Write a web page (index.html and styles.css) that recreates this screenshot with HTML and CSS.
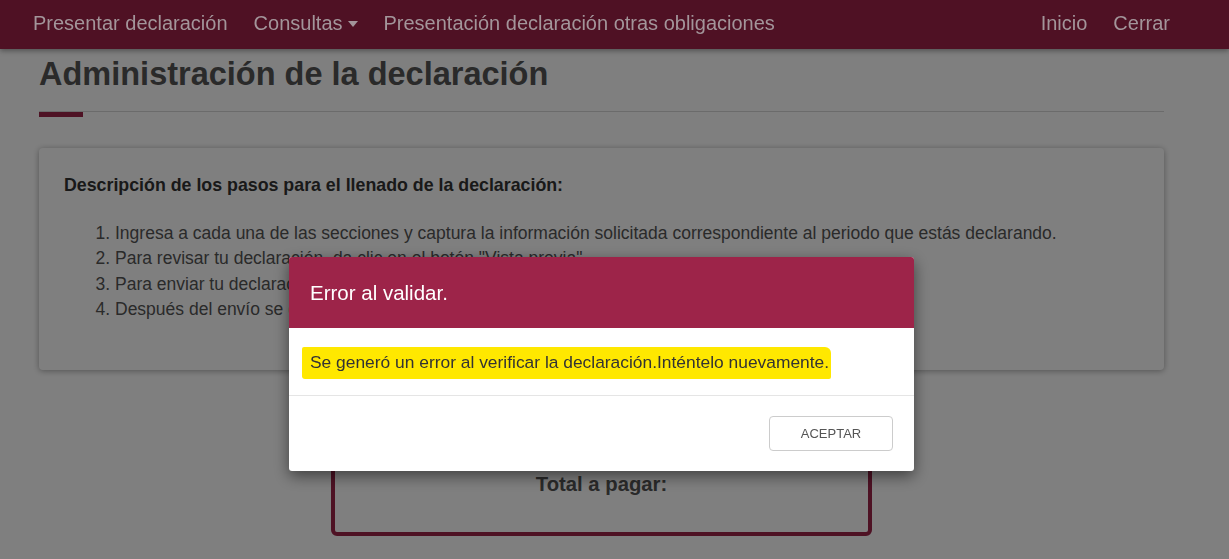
FILE: index.html
```html
<!DOCTYPE html>
<html lang="es">
<head>
<meta charset="utf-8">
<title>Administración de la declaración</title>
<link rel="stylesheet" href="styles.css">
</head>
<body>
<header class="navbar">
  <nav class="nav-left">
    <a class="nav-link" href="#">Presentar declaración</a>
    <a class="nav-link" href="#">Consultas<span class="caret"></span></a>
    <a class="nav-link" href="#">Presentación declaración otras obligaciones</a>
  </nav>
  <nav class="nav-right">
    <a class="nav-link" href="#">Inicio</a>
    <a class="nav-link" href="#">Cerrar</a>
  </nav>
</header>

<main class="container">
  <h2 class="page-title">Administración de la declaración</h2>
  <div class="rule"><span class="rule-accent"></span></div>

  <section class="card">
    <p class="card-heading">Descripción de los pasos para el llenado de la declaración:</p>
    <ol class="steps">
      <li>Ingresa a cada una de las secciones y captura la información solicitada correspondiente al periodo que estás declarando.</li>
      <li>Para revisar tu declaración, da clic en el botón "Vista previa".</li>
      <li>Para enviar tu declaración, da clic en el botón "Enviar declaración".</li>
      <li>Después del envío se genera tu acuse de recibo de la declaración.</li>
    </ol>
  </section>

  <section class="total-box">
    <p class="total-label">Total a pagar:</p>
  </section>
</main>

<div class="backdrop"></div>

<div class="modal" role="dialog">
  <div class="modal-header">Error al validar.</div>
  <div class="modal-body">
    <span class="highlight">Se generó un error al verificar la declaración.Inténtelo nuevamente.</span>
  </div>
  <div class="modal-footer">
    <button class="btn" type="button">ACEPTAR</button>
  </div>
</div>
</body>
</html>
```

FILE: styles.css
```css
* { box-sizing: border-box; }

body {
  margin: 0;
  background: #ffffff;
  font-family: "Liberation Sans", Arial, sans-serif;
  color: #545454;
}

.navbar {
  position: relative;
  z-index: 1050;
  height: 49px;
  background: #4f1124;
  display: flex;
  align-items: center;
  padding: 0 46px 4px 20px;
  box-shadow: 0 2px 5px rgba(0, 0, 0, 0.35);
}

.nav-left, .nav-right {
  display: flex;
  align-items: center;
}

.nav-right { margin-left: auto; }

.nav-link {
  color: #a3959a;
  text-decoration: none;
  font-size: 20px;
  line-height: 24px;
  padding: 0 13px;
  display: flex;
  align-items: center;
}

.nav-left .nav-link:first-child { padding-left: 13px; }

.caret {
  display: inline-block;
  width: 0;
  height: 0;
  margin-left: 5px;
  margin-top: 2px;
  border-top: 6px solid #a3959a;
  border-left: 5px solid transparent;
  border-right: 5px solid transparent;
}

.container {
  width: 1125px;
  margin-left: 39px;
}

.page-title {
  margin: 7px 0 0;
  font-size: 32.5px;
  line-height: 36px;
  font-weight: bold;
  color: #545454;
}

.rule {
  margin-top: 19px;
  border-top: 1px solid #d6d6d6;
}

.rule-accent {
  display: block;
  width: 44px;
  height: 5px;
  background: #9d2449;
}

.card {
  margin-top: 31px;
  background: #ffffff;
  border-radius: 4px;
  box-shadow: 0 1px 6px rgba(0, 0, 0, 0.35);
  padding: 26px 25px 26px 25px;
  height: 222px;
}

.card-heading {
  margin: 0;
  font-size: 17.8px;
  line-height: 22px;
  font-weight: bold;
  color: #333333;
}

.steps {
  margin: 25px 0 0;
  padding-left: 51px;
  font-size: 17.5px;
  line-height: 25.3px;
  color: #545454;
}

.total-box {
  width: 541px;
  margin: 40px auto 0;
  border: 4px solid #9d2449;
  border-radius: 6px;
  padding: 58px 0 36px;
}

.total-label {
  margin: 0;
  text-align: center;
  font-size: 20.3px;
  line-height: 24px;
  font-weight: bold;
  color: #545454;
}

.backdrop {
  position: fixed;
  inset: 0;
  z-index: 1040;
  background: rgba(0, 0, 0, 0.5);
}

.modal {
  position: fixed;
  z-index: 1060;
  top: 257px;
  left: 289px;
  width: 625px;
  background: #ffffff;
  border-radius: 3px;
  overflow: hidden;
  box-shadow: 0 5px 15px rgba(0, 0, 0, 0.5);
}

.modal-header {
  height: 71px;
  background: #9d2449;
  color: #ffffff;
  font-size: 20.5px;
  display: flex;
  align-items: center;
  padding: 0 21px;
}

.modal-body {
  height: 68px;
  display: flex;
  align-items: center;
  padding: 2px 13px 0;
  border-bottom: 1px solid #e5e5e5;
}

.highlight {
  background: #ffe800;
  color: #333333;
  font-size: 17.4px;
  padding: 5px 2px 6px 8px;
  border-radius: 2px 6px 2px 3px;
}

.modal-footer {
  height: 75px;
  display: flex;
  justify-content: flex-end;
  align-items: center;
  padding: 0 21px;
}

.btn {
  width: 124px;
  height: 35px;
  background: #ffffff;
  border: 1px solid #cccccc;
  border-radius: 4px;
  font-family: "Liberation Sans", Arial, sans-serif;
  font-size: 13px;
  color: #555555;
}
```
